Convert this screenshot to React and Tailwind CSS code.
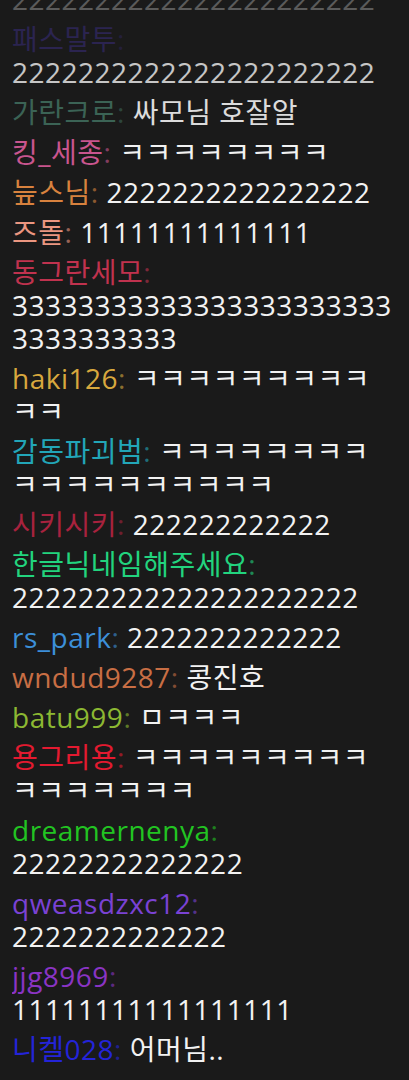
const messages = [
  { name: '', color: '', text: '2222222222222222222222', fade: 'opacity-30' },
  { name: '패스말투', color: 'text-[#30275e]', text: '2222222222222222222222', fade: 'opacity-80' },
  { name: '가란크로', color: 'text-[#3f6b5c]', text: '싸모님 호잘알', fade: 'opacity-90' },
  { name: '킹_세종', color: 'text-[#c9558e]', text: 'ㅋㅋㅋㅋㅋㅋㅋㅋ' },
  { name: '늪스님', color: 'text-[#d8823e]', text: '2222222222222222' },
  { name: '즈돌', color: 'text-[#eb9680]', text: '11111111111111' },
  { name: '동그란세모', color: 'text-[#c0324e]', text: '333333333333333333333333333333333' },
  { name: 'haki126', color: 'text-[#d8a83e]', text: 'ㅋㅋㅋㅋㅋㅋㅋㅋㅋㅋㅋ' },
  { name: '감동파괴범', color: 'text-[#22a6b8]', text: 'ㅋㅋㅋㅋㅋㅋㅋㅋㅋㅋㅋㅋㅋㅋㅋㅋㅋㅋ' },
  { name: '시키시키', color: 'text-[#a8223e]', text: '222222222222' },
  { name: '한글닉네임해주세요', color: 'text-[#22d47e]', text: '222222222222222222222' },
  { name: 'rs_park', color: 'text-[#3c8fd8]', text: '2222222222222' },
  { name: 'wndud9287', color: 'text-[#c86e44]', text: '콩진호' },
  { name: 'batu999', color: 'text-[#8cb832]', text: 'ㅁㅋㅋㅋ' },
  { name: '용그리용', color: 'text-[#e41a30]', text: 'ㅋㅋㅋㅋㅋㅋㅋㅋㅋㅋㅋㅋㅋㅋㅋㅋ' },
  { name: 'dreamernenya', color: 'text-[#22c422]', text: '22222222222222' },
  { name: 'qweasdzxc12', color: 'text-[#7a42d4]', text: '2222222222222' },
  { name: 'jjg8969', color: 'text-[#8a34c4]', text: '11111111111111111' },
  { name: '니켈028', color: 'text-[#2424d8]', text: '어머님..' },
];

export default function App() {
  return (
    <div
      className="w-[409px] h-[1080px] overflow-hidden bg-[#1a1a1a] pl-3 text-[28px] leading-[33px] tracking-[0.5px]"
      style={{ fontFamily: '"Open Sans", "Noto Sans CJK KR", sans-serif' }}
    >
      <div className="-mt-[17px] flex w-[382px] flex-col gap-[7px] overflow-hidden">
        {messages.map((m, i) => (
          <p key={i} className={`break-words ${m.fade || ''}`}>
            {m.name && (
              <span className={m.color}>
                {m.name}
                <span className="opacity-60">: </span>
              </span>
            )}
            <span className="text-[#f2f2f2]">{m.text}</span>
          </p>
        ))}
      </div>
    </div>
  );
}
